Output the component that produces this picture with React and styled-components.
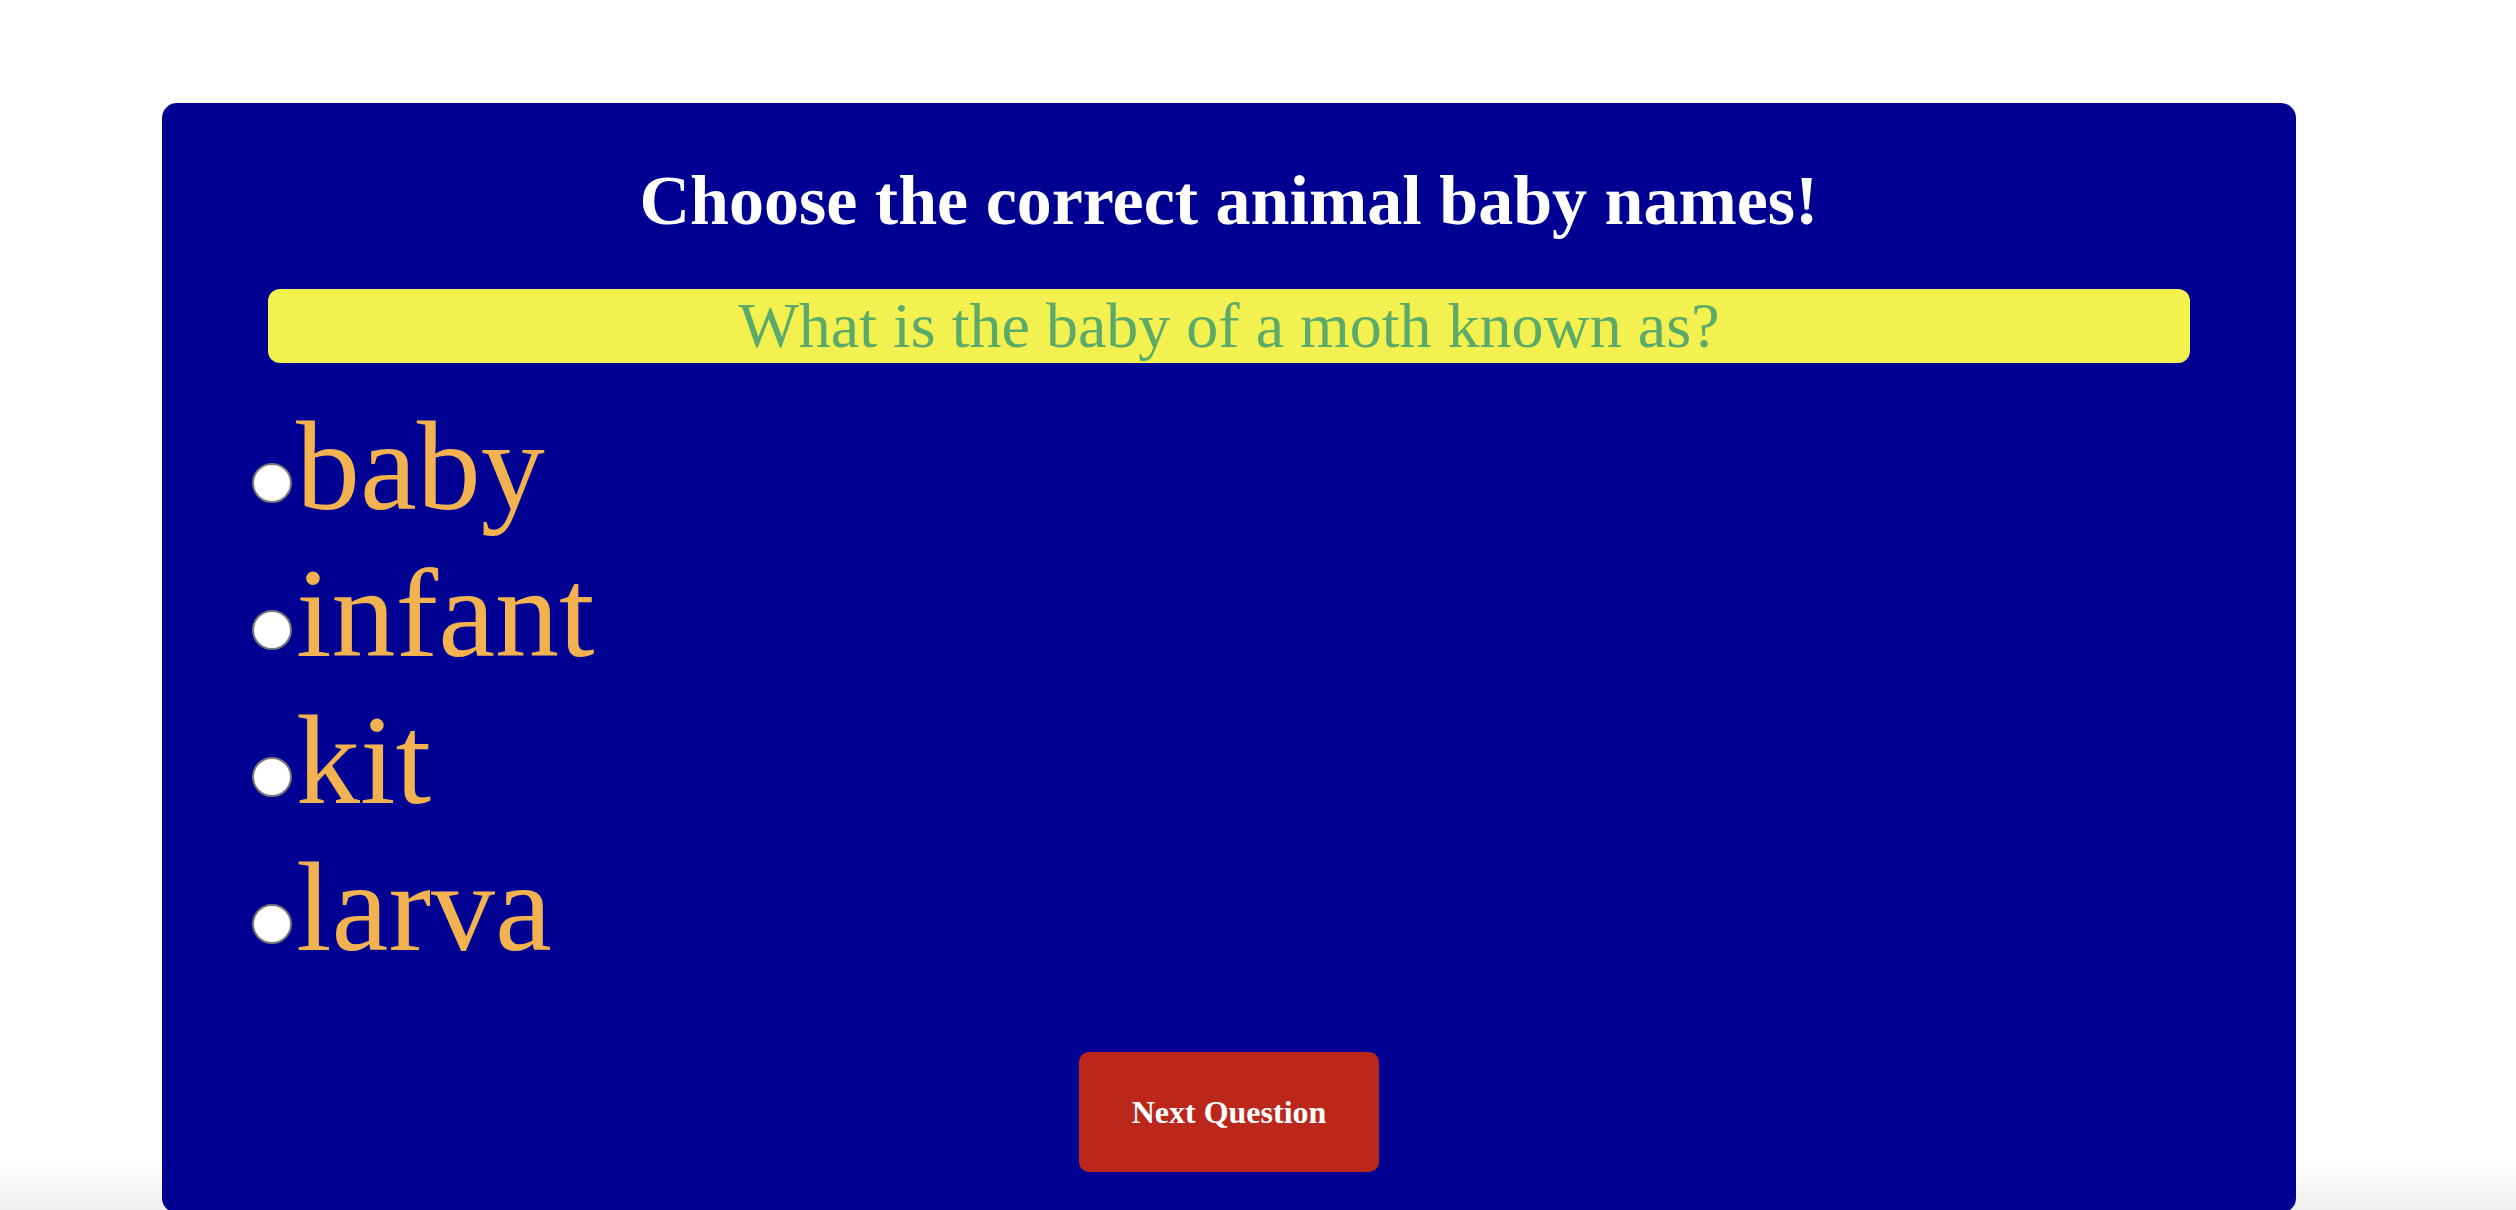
import React, { useState } from "react";
import styled, { createGlobalStyle } from "styled-components";

const GlobalStyle = createGlobalStyle`
  html {
    height: 100%;
    background: linear-gradient(to bottom, #ffffff calc(100% - 50px), #efefef 100%);
  }
  body {
    margin: 0;
    font-family: "Liberation Serif", "Times New Roman", serif;
  }
`;

const Card = styled.div`
  margin: 103px 0 0 162px;
  width: 2134px;
  box-sizing: border-box;
  padding: 58px 0 41px;
  background: #000093;
  border-radius: 15px;
  display: flex;
  flex-direction: column;
`;

const Title = styled.h1`
  margin: 0 0 48px;
  font-size: 70px;
  font-weight: bold;
  color: #ffffff;
  text-align: center;
`;

const Question = styled.div`
  margin: 0 106px 30px;
  background: #f3f14f;
  border-radius: 12px;
  font-size: 64px;
  color: #5caa6a;
  text-align: center;
`;

const Options = styled.div`
  display: flex;
  flex-direction: column;
  padding-left: 90px;
`;

const Option = styled.label`
  display: flex;
  align-items: center;
  font-size: 128px;
  color: #f2b24f;
  cursor: pointer;
`;

const Radio = styled.input`
  appearance: none;
  width: 40px;
  height: 40px;
  margin: 32px 4px 0 0;
  border-radius: 50%;
  border: 2px solid #767676;
  background: #ffffff;
  box-sizing: border-box;
  flex: none;

  &:checked {
    border: 12px solid #1a73e8;
  }
`;

const NextButton = styled.button`
  align-self: center;
  margin-top: 71px;
  width: 300px;
  height: 120px;
  border: none;
  border-radius: 10px;
  background: #bc271c;
  color: #ffffff;
  font-family: "Liberation Serif", "Times New Roman", serif;
  font-size: 32px;
  font-weight: bold;
  cursor: pointer;
`;

const answers = ["baby", "infant", "kit", "larva"];

export default function App() {
  const [picked, setPicked] = useState(null);

  return (
    <>
      <GlobalStyle />
      <Card>
        <Title>Choose the correct animal baby names!</Title>
        <Question>What is the baby of a moth known as?</Question>
        <Options>
          {answers.map((a) => (
            <Option key={a}>
              <Radio
                type="radio"
                name="answer"
                checked={picked === a}
                onChange={() => setPicked(a)}
              />
              {a}
            </Option>
          ))}
        </Options>
        <NextButton>Next Question</NextButton>
      </Card>
    </>
  );
}
